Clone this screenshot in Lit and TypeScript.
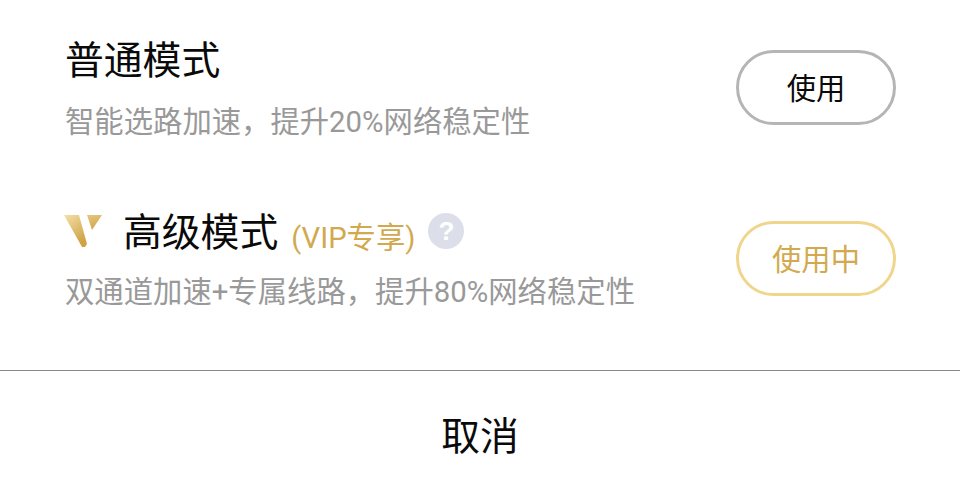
import { LitElement, html, css } from "lit";
import { customElement } from "lit/decorators.js";

@customElement("app-root")
export class AppRoot extends LitElement {
  static styles = css`
    :host {
      display: flex;
      flex-direction: column;
      width: 960px;
      height: 498px;
      background: #fff;
      font-family: Roboto, "Noto Sans CJK SC", "Liberation Sans", sans-serif;
      overflow: hidden;
    }
    .list {
      height: 370px;
      box-sizing: border-box;
      padding: 0 64px 0 65px;
      display: flex;
      flex-direction: column;
    }
    .row {
      flex: none;
      display: flex;
      align-items: center;
      justify-content: space-between;
    }
    .row.first { height: 175px; }
    .row.second { height: 166px; }
    .row.first .sub { margin-top: 12px; }
    .row.second .sub { margin-top: 10px; }
    .row.second .text { padding-top: 2px; }
    .title {
      display: flex;
      align-items: center;
      height: 56px;
      font-size: 38.8px;
      line-height: 56px;
      color: #0a0a0a;
    }
    .sub {
      font-size: 29.35px;
      line-height: 42px;
      color: #999;
    }
    .logo { width: 38px; height: 33px; margin: -4px 21px 0 -1px; }
    .vip { font-size: 29.3px; color: #d2a94f; margin-left: 13px; line-height: 56px; padding-top: 10px; }
    .help {
      width: 36px;
      height: 36px;
      border-radius: 50%;
      background: #dcdfe9;
      color: #fff;
      font-size: 26px;
      font-weight: 700;
      line-height: 36px;
      text-align: center;
      margin: -4px 0 0 13px;
      font-family: "Liberation Sans", sans-serif;
    }
    .btn {
      width: 160px;
      height: 75px;
      box-sizing: border-box;
      border-radius: 38px;
      border: 3px solid #b5b5b5;
      padding-bottom: 3px;
      display: flex;
      align-items: center;
      justify-content: center;
      font-size: 29.3px;
      color: #0a0a0a;
      flex: none;
    }
    .btn.active { border-color: #f0d68c; color: #d2a94f; }
    .cancel {
      flex: 1;
      border-top: 1px solid #888;
      display: flex;
      align-items: center;
      justify-content: center;
      font-size: 38.8px;
      color: #0a0a0a;
      padding-bottom: 4px;
    }
  `;

  render() {
    return html`
      <div class="list">
        <div class="row first">
          <div class="text">
            <div class="title">普通模式</div>
            <div class="sub">智能选路加速，提升20%网络稳定性</div>
          </div>
          <div class="btn">使用</div>
        </div>
        <div class="row second">
          <div class="text">
            <div class="title">
              <svg class="logo" viewBox="0 0 38 33">
                <defs>
                  <linearGradient id="g" x1="0" y1="0" x2="0.5" y2="1">
                    <stop offset="0" stop-color="#f3e0a8" />
                    <stop offset="1" stop-color="#cfa245" />
                  </linearGradient>
                  <linearGradient id="h" x1="0" y1="0" x2="0.3" y2="1">
                    <stop offset="0" stop-color="#e6c77c" />
                    <stop offset="1" stop-color="#cfa84e" />
                  </linearGradient>
                </defs>
                <polygon points="0,0 15,0 23,29 21,32 18,32" fill="url(#g)" />
                <polygon points="23,0 38,0 28,15" fill="url(#h)" />
              </svg>
              高级模式<span class="vip">(VIP专享)</span><span class="help">?</span>
            </div>
            <div class="sub">双通道加速+专属线路，提升80%网络稳定性</div>
          </div>
          <div class="btn active">使用中</div>
        </div>
      </div>
      <div class="cancel">取消</div>
    `;
  }
}
